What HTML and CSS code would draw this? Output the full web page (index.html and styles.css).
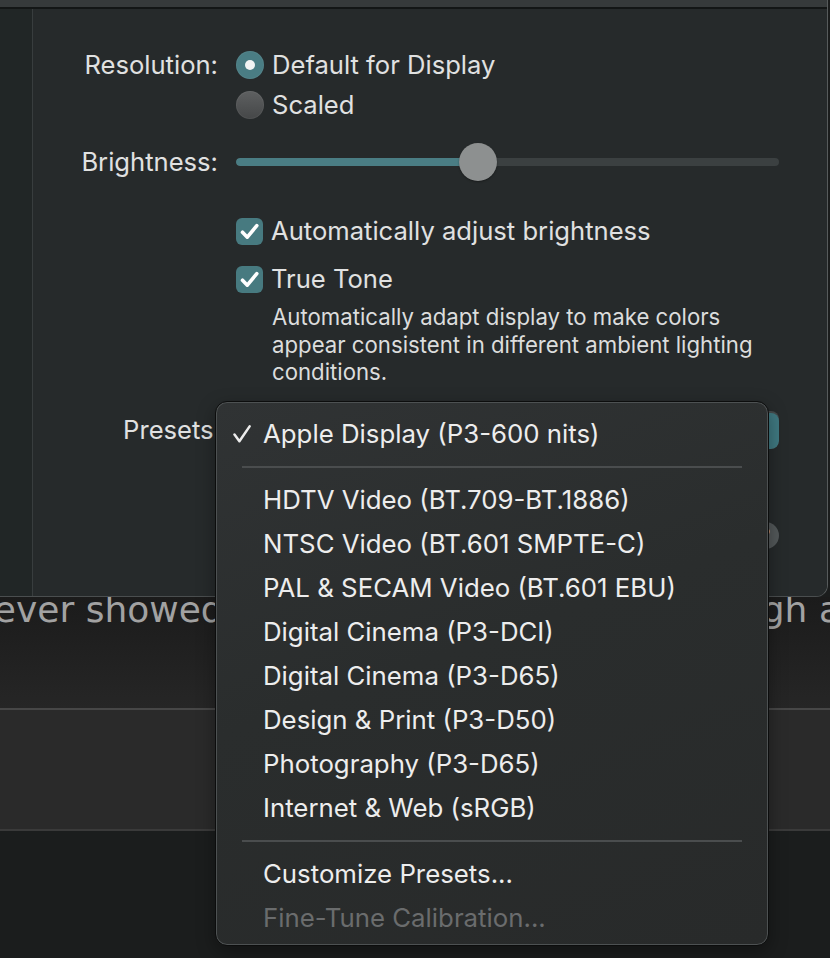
FILE: index.html
```html
<!DOCTYPE html>
<html>
<head>
<meta charset="utf-8">
<link rel="stylesheet" href="styles.css">
</head>
<body>
<div class="screen">
  <div class="window">
    <div class="toolbar"></div>
    <div class="win-body">
      <div class="sidebar"></div>
      <div class="panel">
        <div class="row row-res">
          <div class="label">Resolution:</div>
          <div class="control options">
            <div class="option"><span class="radio on"><span class="dot"></span></span><span>Default for Display</span></div>
            <div class="option"><span class="radio"></span><span>Scaled</span></div>
          </div>
        </div>
        <div class="row row-bright">
          <div class="label">Brightness:</div>
          <div class="control">
            <div class="slider">
              <div class="track"><div class="fill" style="width: 242px"></div></div>
              <div class="knob" style="left: 223px"></div>
            </div>
          </div>
        </div>
        <div class="row row-check1">
          <div class="label"></div>
          <div class="control option">
            <span class="checkbox"><svg viewBox="0 0 27 27" width="27" height="27"><path d="M6.5 14.2 L11.3 19.2 L20.8 7.6" fill="none" stroke="#ffffff" stroke-width="3.6" stroke-linecap="round" stroke-linejoin="round"/></svg></span>
            <span>Automatically adjust brightness</span>
          </div>
        </div>
        <div class="row row-check2">
          <div class="label"></div>
          <div class="control option">
            <span class="checkbox"><svg viewBox="0 0 27 27" width="27" height="27"><path d="M6.5 14.2 L11.3 19.2 L20.8 7.6" fill="none" stroke="#ffffff" stroke-width="3.6" stroke-linecap="round" stroke-linejoin="round"/></svg></span>
            <span>True Tone</span>
          </div>
        </div>
        <div class="row row-desc">
          <div class="label"></div>
          <div class="control desc">Automatically adapt display to make colors appear consistent in different ambient lighting conditions.</div>
        </div>
        <div class="row row-presets">
          <div class="label presets-label">Presets:</div>
          <div class="control">
            <div class="popup"><span class="popup-text">Apple Display (P3-600 nits)</span><span class="popup-arrow"></span></div>
          </div>
        </div>
        <div class="row row-help">
          <div class="label"></div>
          <div class="control help-wrap"><span class="help">?</span></div>
        </div>
      </div>
    </div>
  </div>

  <div class="page">
    <div class="page-top"><p class="page-text">never showed up when I ran the page through a</p></div>
    <div class="page-mid"></div>
    <div class="page-bottom"></div>
  </div>

  <div class="menu">
    <div class="item checked"><svg class="tick" viewBox="0 0 18 18" width="18" height="18"><path d="M1.5 9.6 L6.4 16.2 L16.6 1.4" fill="none" stroke="#ececec" stroke-width="2.5" stroke-linecap="round" stroke-linejoin="round"/></svg>Apple Display (P3-600 nits)</div>
    <div class="sep"></div>
    <div class="item">HDTV Video (BT.709-BT.1886)</div>
    <div class="item">NTSC Video (BT.601 SMPTE-C)</div>
    <div class="item">PAL &amp; SECAM Video (BT.601 EBU)</div>
    <div class="item">Digital Cinema (P3-DCI)</div>
    <div class="item">Digital Cinema (P3-D65)</div>
    <div class="item">Design &amp; Print (P3-D50)</div>
    <div class="item">Photography (P3-D65)</div>
    <div class="item">Internet &amp; Web (sRGB)</div>
    <div class="sep"></div>
    <div class="item">Customize Presets...</div>
    <div class="item disabled">Fine-Tune Calibration...</div>
  </div>
</div>
</body>
</html>
```

FILE: styles.css
```css
* { box-sizing: border-box; }

html, body {
  margin: 0;
  padding: 0;
  background: #212121;
}

.screen {
  position: relative;
  width: 830px;
  height: 958px;
  overflow: hidden;
  background: #1b1d1d;
  font-family: "Inter", "Liberation Sans", sans-serif;
  color: #e0e1e1;
}

.window {
  position: relative;
  z-index: 1;
  width: 828px;
  height: 597px;
  border-right: 1px solid #575b5c;
  border-bottom: 1px solid #4a4e4f;
  border-bottom-right-radius: 12px;
  overflow: hidden;
  background: #262a2b;
  display: flex;
  flex-direction: column;
}

.toolbar {
  height: 9px;
  flex: none;
  background: #363a3b;
  border-bottom: 2px solid #131616;
}

.win-body {
  flex: 1;
  display: flex;
}

.sidebar {
  width: 33px;
  flex: none;
  background: #212626;
  border-right: 1px solid #383d3e;
}

.panel {
  flex: 1;
  padding-top: 36px;
  padding-right: 48px;
  background: #262a2b;
}

.row {
  display: grid;
  grid-template-columns: 185px 1fr;
  column-gap: 18px;
}

.label {
  text-align: right;
  font-size: 25.6px;
  line-height: 40px;
  color: #e0e1e1;
  white-space: nowrap;
}

.presets-label {
  margin-right: -3px;
}

.control {
  font-size: 25.6px;
  line-height: 40px;
}

.options {
  display: flex;
  flex-direction: column;
}

.option {
  display: flex;
  align-items: center;
  gap: 8px;
  height: 40px;
}

.radio {
  width: 28px;
  height: 28px;
  border-radius: 50%;
  flex: none;
  background: linear-gradient(#5e6061, #454748);
  box-shadow: inset 0 0 0 1px rgba(255,255,255,0.05);
  display: flex;
  align-items: center;
  justify-content: center;
}

.radio.on {
  background: #4a7d84;
}

.dot {
  width: 10px;
  height: 10px;
  border-radius: 50%;
  background: #f2f4f4;
}

.row-bright { margin-top: 17px; }

.slider {
  position: relative;
  height: 40px;
  display: flex;
  align-items: center;
}

.track {
  width: 100%;
  height: 8px;
  border-radius: 4px;
  background: #3b4041;
  overflow: hidden;
}

.fill {
  height: 100%;
  background: #4a7d84;
  border-radius: 4px;
}

.knob {
  position: absolute;
  top: 1px;
  width: 38px;
  height: 38px;
  border-radius: 50%;
  background: #8d9090;
  box-shadow: 0 1px 2px rgba(0,0,0,0.35);
}

.row-check1 { margin-top: 29px; }
.row-check2 { margin-top: 8px; }

.checkbox {
  width: 27px;
  height: 27px;
  border-radius: 6px;
  background: #477a80;
  flex: none;
  display: flex;
}

.row-desc { margin-top: 4px; }

.desc {
  font-size: 22.2px;
  line-height: 27.5px;
  padding-left: 36px;
  color: #dcdddd;
}

.row-presets { margin-top: 24px; }

.popup {
  height: 38px;
  margin-top: 1px;
  border-radius: 8px;
  background: #464b4c;
  display: flex;
  justify-content: space-between;
  align-items: center;
  overflow: hidden;
}

.popup-text {
  padding-left: 12px;
  font-size: 25px;
}

.popup-arrow {
  width: 32px;
  height: 36px;
  margin-top: 2px;
  background: #3f7880;
  border-radius: 0 8px 8px 0;
}

.row-help { margin-top: 72px; }

.help-wrap {
  display: flex;
  justify-content: flex-end;
}

.help {
  width: 27px;
  height: 27px;
  border-radius: 50%;
  background: #535859;
  font-size: 18px;
  line-height: 27px;
  text-align: center;
  color: #e0e0e0;
}

/* page behind the window */
.page {
  display: flex;
  flex-direction: column;
}

.page-top {
  height: 111px;
  background: linear-gradient(#1b1b1b, #262626);
}

.page-text {
  margin: 0 0 0 -29px;
  font-family: "DejaVu Sans", sans-serif;
  font-size: 36px;
  line-height: 26px;
  color: #a2a2a2;
  white-space: nowrap;
}

.page-mid {
  height: 123px;
  background: #2a2a2a;
  border-top: 2px solid #474747;
  border-bottom: 2px solid #3a3a3a;
}

.page-bottom {
  flex: 1;
  height: 130px;
  background: #212121;
}

/* popup menu */
.menu {
  position: absolute;
  z-index: 2;
  left: 215px;
  top: 401px;
  width: 554px;
  height: 545px;
  padding: 10px 0 7px;
  border-radius: 12px;
  background: linear-gradient(160deg, #303334 0%, #2a2d2d 45%, #282a2a 100%);
  border: 1px solid #0c0d0d;
  box-shadow: inset 0 0 0 1px #4d5152, 0 6px 18px rgba(0,0,0,0.35);
}

.item {
  position: relative;
  height: 44px;
  line-height: 44px;
  padding-left: 47px;
  font-size: 25.8px;
  color: #ededed;
  white-space: nowrap;
}

.item.disabled {
  color: #6a6c6d;
}

.tick {
  position: absolute;
  left: 17px;
  top: 13px;
}

.sep {
  height: 22px;
  margin: 0 26px;
  display: flex;
  align-items: center;
}

.sep::before {
  content: "";
  display: block;
  width: 100%;
  height: 2px;
  background: #4a4d4e;
}
```
